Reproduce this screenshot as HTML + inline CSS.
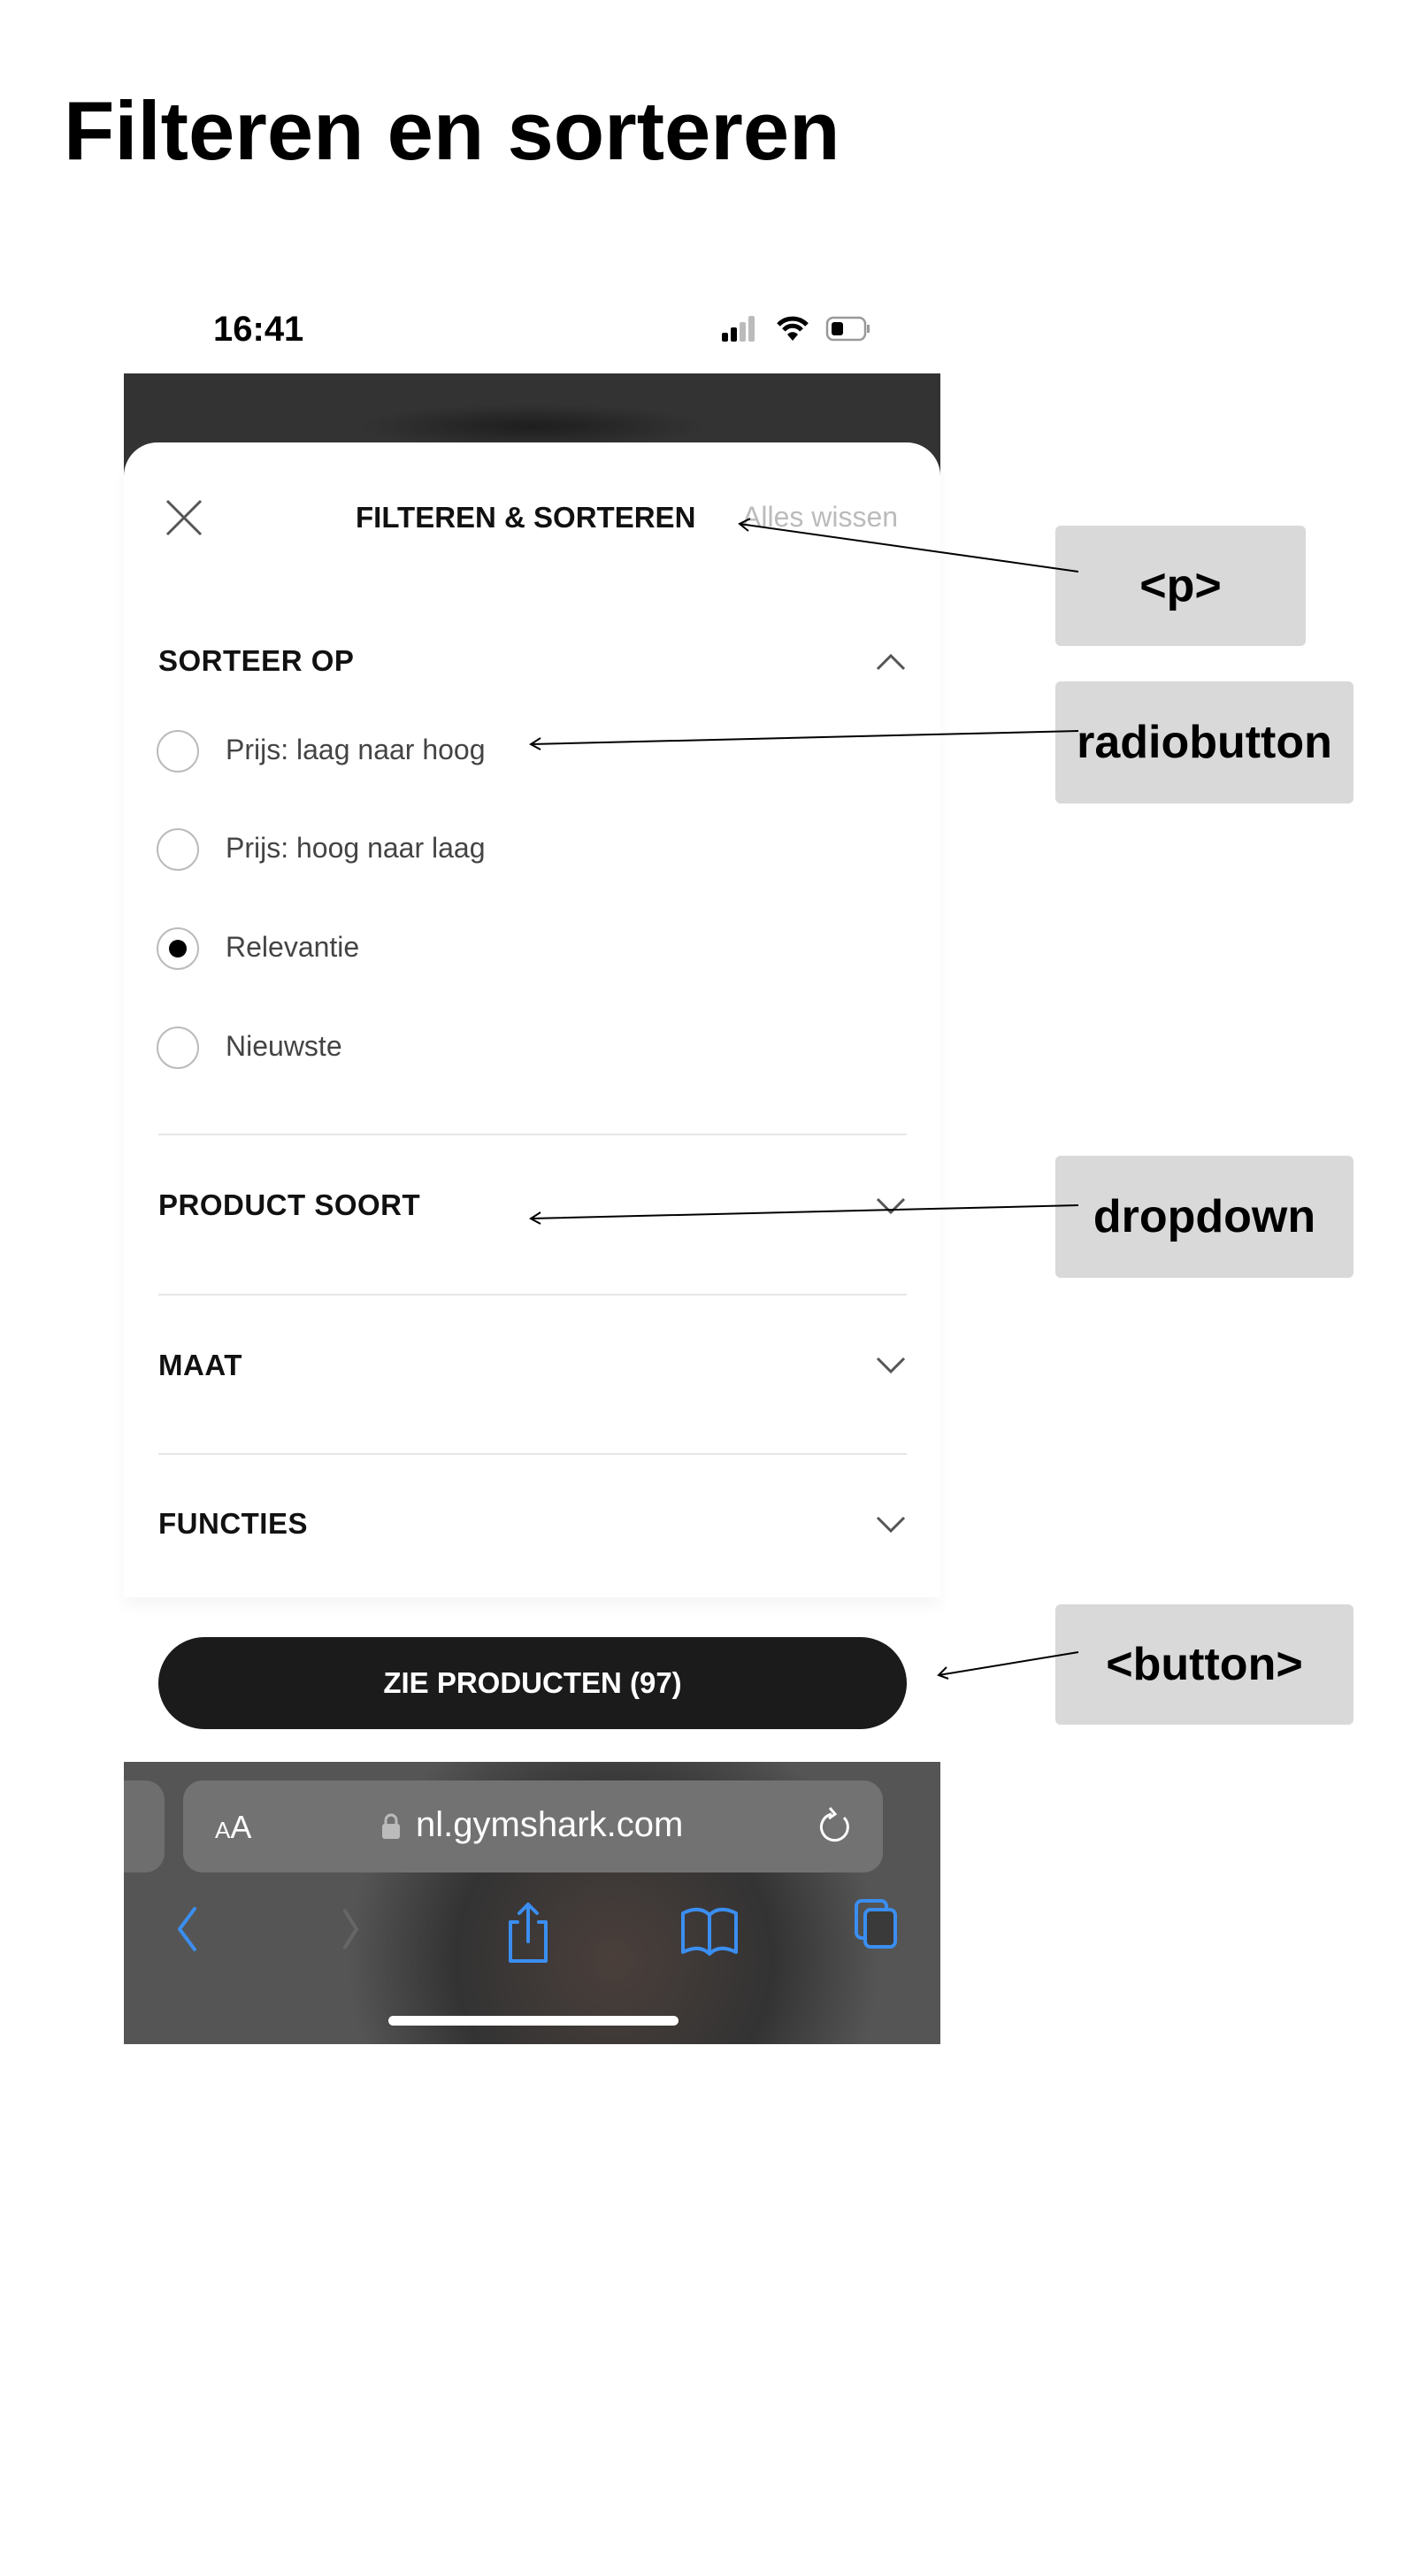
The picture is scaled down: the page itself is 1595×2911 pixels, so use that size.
<!DOCTYPE html>
<html><head><meta charset="utf-8"><style>
body{margin:0;width:1595px;height:2911px;background:#fff;position:relative;font-family:"Liberation Sans",sans-serif;overflow:hidden}
.a{position:absolute}
.t{font-weight:bold;color:#000}
.sec{position:absolute;left:179px;font-weight:bold;font-size:33px;color:#111;letter-spacing:0.5px}
.div{position:absolute;left:179px;width:846px;height:2px;background:#e6e6e6}
.rad{position:absolute;left:177px;width:48px;height:48px;border:2px solid #bbb;border-radius:50%;box-sizing:border-box}
.lab{position:absolute;left:255px;font-size:32px;color:#444}
.box{position:absolute;background:#d9d9d9;border-radius:6px;display:flex;align-items:center;justify-content:center;font-weight:bold;font-size:52px;color:#000}
</style></head><body>
<div class="a t" style="left:72px;top:94px;font-size:94px">Filteren en sorteren</div>
<div class="a" style="left:241px;top:350px;font-size:40px;font-weight:bold">16:41</div>
<svg class="a" style="left:812px;top:352px" width="200" height="40">
<rect x="4" y="24" width="7" height="10" rx="2" fill="#000"/><rect x="14" y="18" width="7" height="16" rx="2" fill="#000"/><rect x="24" y="12" width="7" height="22" rx="2" fill="#bbb"/><rect x="34" y="5" width="7" height="29" rx="2" fill="#bbb"/>
<path d="M68 15a22 22 0 0 1 32 0M74 21a13 13 0 0 1 20 0" stroke="#000" stroke-width="5" fill="none"/><path d="M78 26l6 7 6-7a8 8 0 0 0-12 0z" fill="#000"/>
<rect x="123" y="7" width="43" height="25" rx="7" fill="none" stroke="#999" stroke-width="2.5"/><rect x="128" y="12" width="13" height="15" rx="3" fill="#000"/><rect x="168" y="15" width="3" height="9" fill="#999"/>
</svg>
<div class="a" style="left:140px;top:422px;width:923px;height:120px;background:radial-gradient(ellipse at 50% 50%,#1e1e1e,#333 30%,#333)"></div>
<div class="a" style="left:140px;top:500px;width:923px;height:1305px;background:#fff;border-radius:38px 38px 0 0;box-shadow:0 10px 16px rgba(0,0,0,0.04)"></div>
<svg class="a" style="left:186px;top:563px" width="44" height="44"><path d="M3 3L41 41M41 3L3 41" stroke="#555" stroke-width="3"/></svg>
<div class="a" style="left:402px;top:566px;font-size:33px;font-weight:bold;color:#111">FILTEREN &amp; SORTEREN</div>
<div class="a" style="left:839px;top:566px;font-size:32px;color:#bbb">Alles wissen</div>
<div class="sec" style="top:728px">SORTEER OP</div>
<svg class="a" style="left:990px;top:738px" width="34" height="20"><path d="M2 18L17 3 32 18" stroke="#555" stroke-width="3" fill="none"/></svg>
<div class="rad" style="top:825px"></div><div class="lab" style="top:829px">Prijs: laag naar hoog</div>
<div class="rad" style="top:936px"></div><div class="lab" style="top:940px">Prijs: hoog naar laag</div>
<div class="rad" style="top:1048px"></div><div class="a" style="left:191px;top:1062px;width:20px;height:20px;border-radius:50%;background:#000"></div><div class="lab" style="top:1052px">Relevantie</div>
<div class="rad" style="top:1160px"></div><div class="lab" style="top:1164px">Nieuwste</div>
<div class="div" style="top:1281px"></div>
<div class="sec" style="top:1343px">PRODUCT SOORT</div>
<div class="div" style="top:1462px"></div>
<div class="sec" style="top:1524px">MAAT</div>
<div class="div" style="top:1642px"></div>
<div class="sec" style="top:1703px">FUNCTIES</div>
<svg class="a" style="left:990px;top:1352px" width="34" height="400"><g stroke="#555" stroke-width="3" fill="none"><path d="M2 3L17 18 32 3"/><path d="M2 183L17 198 32 183"/><path d="M2 363L17 378 32 363"/></g></svg>
<div class="a" style="left:179px;top:1850px;width:846px;height:104px;background:#1b1b1b;border-radius:52px;color:#fff;font-weight:bold;font-size:33px;display:flex;align-items:center;justify-content:center">ZIE PRODUCTEN (97)</div>
<div class="a" style="left:140px;top:1991px;width:923px;height:319px;background:radial-gradient(ellipse 300px 300px at 60% 70%,#4a3f3b,#333 60%,#555)"></div>
<div class="a" style="left:140px;top:2012px;width:46px;height:104px;background:#6e6e6e;border-radius:0 22px 22px 0"></div>
<div class="a" style="left:207px;top:2012px;width:791px;height:104px;background:#727272;border-radius:22px"></div>
<div class="a" style="left:243px;top:2044px;color:#fff;font-size:36px"><span style="font-size:26px">A</span>A</div>
<svg class="a" style="left:431px;top:2049px" width="22" height="30"><rect x="1" y="12" width="20" height="17" rx="3" fill="#bbb"/><path d="M5 13V8a6 6 0 0 1 12 0v5" stroke="#bbb" stroke-width="3" fill="none"/></svg>
<div class="a" style="left:470px;top:2040px;color:#fff;font-size:40px">nl.gymshark.com</div>
<svg class="a" style="left:924px;top:2040px" width="40" height="46"><path d="M30 14a15 15 0 1 1-14-4" stroke="#fff" stroke-width="3" fill="none"/><path d="M14 3l6 7-7 5" stroke="#fff" stroke-width="3" fill="none"/></svg>
<svg class="a" style="left:190px;top:2140px" width="860" height="80"><g stroke="#3b8ef0" stroke-width="4" fill="none" stroke-linecap="round" stroke-linejoin="round">
<path d="M30 17L13 40 30 63"/>
<path d="M395 32h-8v44h40V32h-8M407 54V12M397 22l10-10 10 10"/>
<path d="M582 66c12-6 22-6 30 2c8-8 18-8 30-2V22c-12-6-22-6-30 2c-8-8-18-8-30-2zM612 24v44"/>
<rect x="778" y="8" width="34" height="42" rx="6"/><rect x="788" y="18" width="34" height="42" rx="6" fill="#3a3a3a"/>
</g><path d="M214 18L228 40 214 62" stroke="#666" stroke-width="4" fill="none" transform="translate(-15 0)"/></svg>
<div class="a" style="left:439px;top:2278px;width:328px;height:11px;border-radius:6px;background:#fff"></div>
<div class="box" style="left:1193px;top:594px;width:283px;height:136px">&lt;p&gt;</div>
<div class="box" style="left:1193px;top:770px;width:337px;height:138px">radiobutton</div>
<div class="box" style="left:1193px;top:1306px;width:337px;height:138px">dropdown</div>
<div class="box" style="left:1193px;top:1813px;width:337px;height:136px">&lt;button&gt;</div>
<svg class="a" style="left:0;top:0" width="1595" height="2911"><g stroke="#000" stroke-width="2" fill="none">
<path d="M1219 646L836 592M848 586l-12 6 10 8"/>
<path d="M1219 826L600 841M611 834l-11 7 11 6"/>
<path d="M1219 1362L600 1377M611 1370l-11 7 11 6"/>
<path d="M1219 1867L1061 1893M1070 1884l-9 9 11 4"/>
</g></svg>
</body></html>
